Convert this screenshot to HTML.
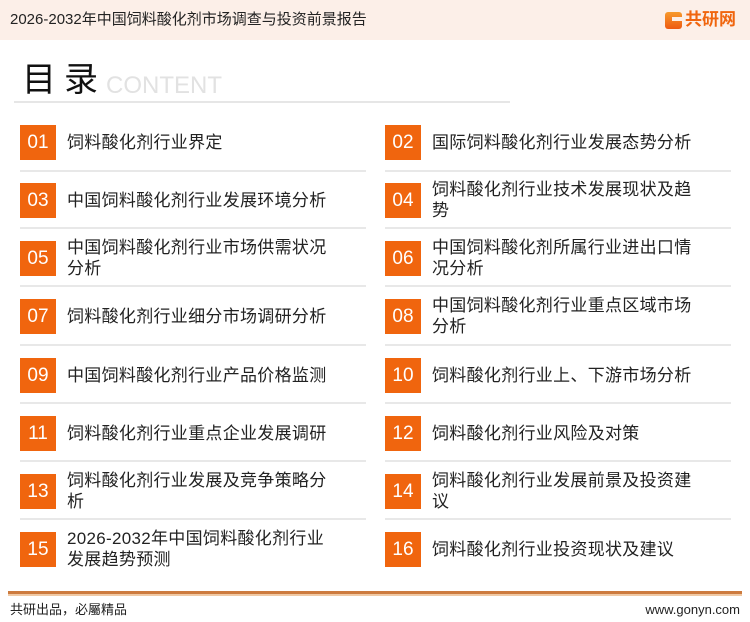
<!DOCTYPE html>
<html><head><meta charset="utf-8"><style>
*{margin:0;padding:0;box-sizing:border-box}
body{width:750px;height:622px;background:#fff;font-family:"Liberation Sans","Noto Sans CJK SC",sans-serif;position:relative;overflow:hidden;color:#222}
.hdr{position:absolute;left:0;top:0;width:750px;height:40px;background:#fcefe8}
.hdr .t{position:absolute;left:10px;top:10px;font-size:15px;line-height:20px;color:#222}
.logo{position:absolute;left:665px;top:10px;font-size:17px;line-height:20px;font-weight:bold;color:#f0650e;display:flex;align-items:center}
.logo .g{width:17px;height:17px;background:linear-gradient(#f79a2c,#ee5a12);border-radius:3px;margin-right:3px;position:relative}
.logo .g:after{content:"";position:absolute;left:7px;top:5px;width:10px;height:4px;background:#fcefe8}
.ml{position:absolute;left:22px;top:62px;font-size:34px;line-height:36px;color:#111;letter-spacing:8px}
.ct{position:absolute;left:106px;top:73px;font-size:24px;line-height:26px;color:#e2e2e2}
.hl{position:absolute;left:14px;top:101px;width:496px;height:2px;background:#e6e6e6}
.it{position:absolute;width:348px;height:35px}
.b{position:absolute;left:0;top:0;width:36px;height:35px;background:#f0650e;color:#fff;font-size:19px;text-align:center;line-height:35px}
.tx{position:absolute;left:47px;width:270px;font-size:17px;line-height:21px;letter-spacing:0.3px;color:#222}
.one{top:7px}.two{top:-4px}
.sep{position:absolute;height:2px;background:#e8e8e8;width:346px}
.fl{position:absolute;left:8px;top:591px;width:734px;height:3px;background:#cd7b3e}
.fl2{position:absolute;left:8px;top:594px;width:734px;height:2px;background:#f0c9a4}
.ft{position:absolute;top:601px;font-size:13px;line-height:18px;color:#222}
</style></head><body>
<div class="hdr"><div class="t">2026-2032年中国饲料酸化剂市场调查与投资前景报告</div>
<div class="logo"><span class="g"></span>共研网</div></div>
<div class="ml">目录</div><div class="ct">CONTENT</div>
<div class="hl"></div>

<div class="it" style="left:20px;top:125px"><div class="b">01</div><div class="tx one">饲料酸化剂行业界定</div></div>
<div class="it" style="left:385px;top:125px"><div class="b">02</div><div class="tx one">国际饲料酸化剂行业发展态势分析</div></div>
<div class="it" style="left:20px;top:183px"><div class="b">03</div><div class="tx one">中国饲料酸化剂行业发展环境分析</div></div>
<div class="it" style="left:385px;top:183px"><div class="b">04</div><div class="tx two">饲料酸化剂行业技术发展现状及趋势</div></div>
<div class="it" style="left:20px;top:241px"><div class="b">05</div><div class="tx two">中国饲料酸化剂行业市场供需状况分析</div></div>
<div class="it" style="left:385px;top:241px"><div class="b">06</div><div class="tx two">中国饲料酸化剂所属行业进出口情况分析</div></div>
<div class="it" style="left:20px;top:299px"><div class="b">07</div><div class="tx one">饲料酸化剂行业细分市场调研分析</div></div>
<div class="it" style="left:385px;top:299px"><div class="b">08</div><div class="tx two">中国饲料酸化剂行业重点区域市场分析</div></div>
<div class="it" style="left:20px;top:358px"><div class="b">09</div><div class="tx one">中国饲料酸化剂行业产品价格监测</div></div>
<div class="it" style="left:385px;top:358px"><div class="b">10</div><div class="tx one">饲料酸化剂行业上、下游市场分析</div></div>
<div class="it" style="left:20px;top:416px"><div class="b">11</div><div class="tx one">饲料酸化剂行业重点企业发展调研</div></div>
<div class="it" style="left:385px;top:416px"><div class="b">12</div><div class="tx one">饲料酸化剂行业风险及对策</div></div>
<div class="it" style="left:20px;top:474px"><div class="b">13</div><div class="tx two">饲料酸化剂行业发展及竞争策略分析</div></div>
<div class="it" style="left:385px;top:474px"><div class="b">14</div><div class="tx two">饲料酸化剂行业发展前景及投资建议</div></div>
<div class="it" style="left:20px;top:532px"><div class="b">15</div><div class="tx two">2026-2032年中国饲料酸化剂行业发展趋势预测</div></div>
<div class="it" style="left:385px;top:532px"><div class="b">16</div><div class="tx one">饲料酸化剂行业投资现状及建议</div></div>

<div class="sep" style="left:20px;top:170px"></div><div class="sep" style="left:385px;top:170px"></div>
<div class="sep" style="left:20px;top:227px"></div><div class="sep" style="left:385px;top:227px"></div>
<div class="sep" style="left:20px;top:285px"></div><div class="sep" style="left:385px;top:285px"></div>
<div class="sep" style="left:20px;top:344px"></div><div class="sep" style="left:385px;top:344px"></div>
<div class="sep" style="left:20px;top:402px"></div><div class="sep" style="left:385px;top:402px"></div>
<div class="sep" style="left:20px;top:460px"></div><div class="sep" style="left:385px;top:460px"></div>
<div class="sep" style="left:20px;top:518px"></div><div class="sep" style="left:385px;top:518px"></div>

<div class="fl"></div><div class="fl2"></div>
<div class="ft" style="left:10px">共研出品，必屬精品</div>
<div class="ft" style="right:10px">www.gonyn.com</div>
</body></html>
